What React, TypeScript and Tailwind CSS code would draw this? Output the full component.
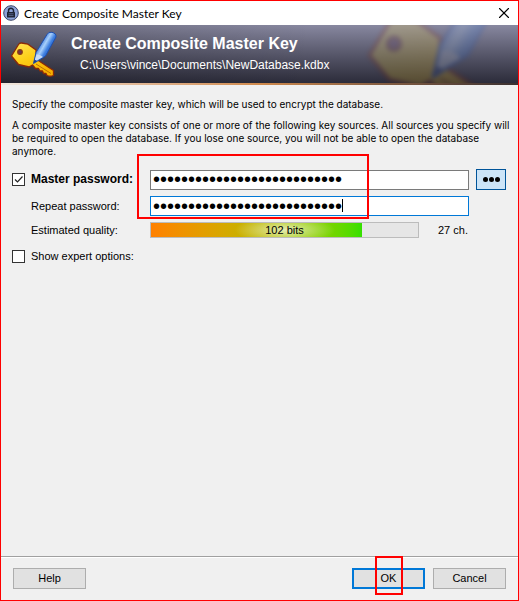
import { useState } from "react"
import { X } from "lucide-react"

function KeyArt({ className }: { className: string }) {
  return (
    <svg className={className} viewBox="0 0 48 48" aria-hidden="true">
      <defs>
        <linearGradient id="gold" x1="0" y1="0" x2="0.6" y2="1">
          <stop offset="0" stopColor="#ffe45a" />
          <stop offset="0.5" stopColor="#fdd018" />
          <stop offset="1" stopColor="#f7b000" />
        </linearGradient>
        <linearGradient id="pen" gradientUnits="userSpaceOnUse" x1="30" y1="13" x2="42" y2="20">
          <stop offset="0" stopColor="#3a78dc" />
          <stop offset="0.35" stopColor="#a8d0fa" />
          <stop offset="0.65" stopColor="#3f80e0" />
          <stop offset="1" stopColor="#1f5cc8" />
        </linearGradient>
      </defs>
      <path
        d="M1.5 26 L8.5 14.5 Q9.5 12.8 11.5 13 L18 14.2 L26 20 L26 29 L43.5 40.5 V45.5 Q40 47 37 45.5 L36 43.5 L33.5 43.5 L32.5 41 L30 41 L28.5 38.5 L25.5 38.5 L22.5 35 L19 37 L8.5 34.5 Z"
        fill="url(#gold)"
        stroke="#8a2a08"
        strokeWidth="1.3"
        strokeLinejoin="round"
      />
      <path d="M26 34 L41 43.5" stroke="#c07000" strokeWidth="1" />
      <circle cx="10" cy="22" r="2.3" fill="#6b3550" stroke="#8a3a10" strokeWidth="1.2" />
      <path d="M23.5 33.5 L26 22.5 L37 4.5 Q38.5 1.5 42 2.3 Q46.5 3.5 46 7 L35.5 26 Z" fill="url(#pen)" stroke="#1d4fae" strokeLinejoin="round" />
      <path d="M24.5 31.5 L26.5 24.5 Q30 24 33 27 Z" fill="#c9dcf4" />
      <path d="M23.5 33.5 L24.3 29.5 L27.3 31 Z" fill="#1d3f8e" />
    </svg>
  )
}

function LockIcon() {
  return (
    <svg className="size-4" viewBox="0 0 16 16" aria-hidden="true">
      <circle cx="8" cy="8" r="7.3" fill="#8ea3d8" stroke="#3b4568" />
      <path d="M5.5 7.5 V5.8 a2.5 2.5 0 0 1 5 0 V7.5" fill="none" stroke="#1d2233" strokeWidth="1.5" />
      <rect x="4" y="7" width="8" height="5.5" rx="0.6" fill="#1d2233" />
      <path d="M5.5 8.8 H10.5 M5.5 10.6 H10.5" stroke="#6f7fae" strokeWidth="0.7" />
    </svg>
  )
}

const box =
  "size-[13px] shrink-0 appearance-none border border-[#333] bg-white"

const field =
  "block h-5 w-full border bg-white px-[2px] font-['Liberation_Sans',Arial,sans-serif] text-[20px] leading-[18px] text-black outline-none"

const dialogButton =
  "h-[21px] w-[73px] bg-[#e1e1e1] text-center"

export default function App() {
  const [password, setPassword] = useState("correct-horse-battery-stapl")
  const [repeat, setRepeat] = useState("correct-horse-battery-stapl")
  const [useMaster, setUseMaster] = useState(true)

  return (
    <div className="flex min-h-screen flex-col border border-[#ff0000] bg-[#f0f0f0] font-['Liberation_Sans',Arial,sans-serif] text-[11px] leading-[13px] text-black">
      {/* Title bar */}
      <header className="flex h-6 items-center bg-white pr-[5px] pl-[2px]">
        <LockIcon />
        <span className="ml-[5px] flex-1 font-[Lato,sans-serif] text-[12px]">Create Composite Master Key</span>
        <button aria-label="Close">
          <X size={18} strokeWidth={1.5} />
        </button>
      </header>

      {/* Banner */}
      <div className="relative flex h-[58px] overflow-hidden bg-linear-to-b from-[#8888a0] to-[#2c2c3a] pl-[9px] text-white">
        <div className="absolute inset-0 bg-linear-to-r from-black/20 to-transparent to-60%" />
        <KeyArt className="absolute -top-[45px] right-[14px] size-[139px] opacity-20 blur-[2px]" />
        <KeyArt className="relative mt-[5px] size-12" />
        <div className="relative ml-[13px]">
          <h1 className="mt-[10px] text-[16px] leading-[18px] font-bold">Create Composite Master Key</h1>
          <p className="mt-1 ml-[9px] text-[12px] leading-4">C:\Users\vince\Documents\NewDatabase.kdbx</p>
        </div>
      </div>
      <div className="h-[2px] bg-linear-to-r from-[#f0e8e0] via-[#d08a4c] to-[#3a3030]" />

      <main className="flex-1 pt-[13px] pr-3 pl-[11px]">
        <div className="-mr-2 space-y-2 font-[Inter,sans-serif] text-[10px] leading-[13px]">
          <p>Specify the composite master key, which will be used to encrypt the database.</p>
          <p>
            A composite master key consists of one or more of the following key sources. All sources you specify will
            be required to open the database. If you lose one source, you will not be able to open the database
            anymore.
          </p>
        </div>

        <div className="relative mt-[11px] grid grid-cols-[138px_1fr_30px] items-center gap-y-[6px]">
          <div className="flex items-center gap-[6px]">
            <span className="relative flex">
              <input
                id="master"
                type="checkbox"
                className={box}
                checked={useMaster}
                onChange={(e) => setUseMaster(e.target.checked)}
              />
              {useMaster && (
                <svg className="pointer-events-none absolute inset-0 size-[13px]" viewBox="0 0 13 13">
                  <path d="M3 6.5 L5.5 9 L10.5 3.5" fill="none" stroke="#222" strokeWidth="1.2" />
                </svg>
              )}
            </span>
            <label htmlFor="master" className="text-[12px] font-bold">Master password:</label>
          </div>
          <div className="pr-[7px]">
            <input
              type="password"
              aria-label="Master password"
              className={`${field} border-[#7a7a7a]`}
              value={password}
              onChange={(e) => setPassword(e.target.value)}
            />
          </div>
          <button aria-label="Show password" className="flex h-[21px] items-center justify-center gap-px border border-[#005499] bg-[#cce4f7]">
            <span className="size-[5px] rounded-full bg-black" />
            <span className="size-[5px] rounded-full bg-black" />
            <span className="size-[5px] rounded-full bg-black" />
          </button>

          <label htmlFor="repeat" className="pl-[19px]">Repeat password:</label>
          <div className="relative pr-[7px]">
            <input
              id="repeat"
              type="password"
              className={`${field} border-[#0078d7]`}
              value={repeat}
              onChange={(e) => setRepeat(e.target.value)}
            />
            <span className="absolute top-[3px] left-[192px] h-[13px] w-px bg-black" />
          </div>
          <span />

          <span className="pl-[19px]">Estimated quality:</span>
          <div className="col-span-2 flex items-center">
            <div className="relative mr-[19px] h-4 flex-1 border border-[#bcbcbc] bg-[#e6e6e6]">
              <div className="h-full w-[79%] bg-linear-to-r from-[#ff8000] to-[#33e000]" />
              <span className="absolute inset-0 flex items-center justify-center">
                <span className="flex h-full w-[100px] items-center justify-center bg-[radial-gradient(closest-side,#ffffffb0,transparent)] bg-[length:100%_200%] bg-center">
                  102 bits
                </span>
              </span>
            </div>
            <span className="w-[68px]">27 ch.</span>
          </div>

          {/* Highlight around both password fields */}
          <div className="pointer-events-none absolute -top-[15px] left-[125px] h-[65px] w-[232px] border-2 border-[#ff0000]" />
        </div>

        <div className="mt-3 flex items-center gap-[6px]">
          <input id="expert" type="checkbox" className={box} />
          <label htmlFor="expert">Show expert options:</label>
        </div>
      </main>

      <footer className="flex gap-2 border-t border-[#a0a0a0] pt-[11px] pr-3 pb-[11px] pl-3 shadow-[inset_0_1px_0_#ffffff]">
        <button className={`${dialogButton} mr-auto border border-[#adadad]`}>Help</button>
        <div className="relative">
          <button className={`${dialogButton} border-2 border-[#0078d7]`}>OK</button>
          <span className="pointer-events-none absolute -top-3 left-[23px] h-[39px] w-7 border-2 border-[#ff0000]" />
        </div>
        <button className={`${dialogButton} border border-[#adadad]`}>Cancel</button>
      </footer>
    </div>
  )
}
